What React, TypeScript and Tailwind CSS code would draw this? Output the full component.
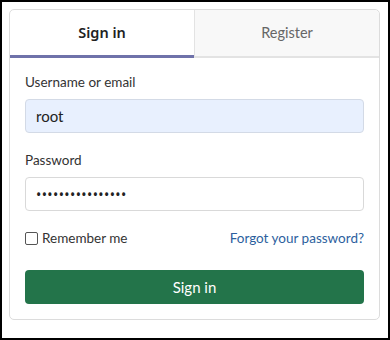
import React from "react";

export default function App() {
  return (
    <div
      className="w-[390px] h-[340px] border-2 border-black bg-white p-[7px] text-[#333]"
      style={{ fontFamily: 'Lato, "Noto Sans", sans-serif' }}
    >
      <div className="w-[371px] h-[311px] border border-[#dcdcdc] rounded-[5px] bg-white flex flex-col">
        <div className="flex h-[48px]">
          <div
            className="w-[184px] flex items-center justify-center border-b-[3px] border-[#6f72aa] text-[14.5px] font-semibold text-[#222]"
            style={{ fontFamily: '"Noto Sans", sans-serif' }}
          >
            Sign in
          </div>
          <div className="flex-1 flex items-center justify-center bg-[#f8f8f8] border-l border-b-2 border-[#e3e3e3] rounded-tr-[5px] text-[14.5px] text-[#666]">
            Register
          </div>
        </div>
        <div className="px-[15px] pt-[14px] flex flex-col">
          <label className="text-[13.5px] leading-[20px] text-[#333]">Username or email</label>
          <div className="mt-[7px] h-[34px] rounded-[4px] border border-[#d3dae6] bg-[#e8f0fe] flex items-center px-[10px] text-[15px] text-[#222]">
            root
          </div>
          <label className="mt-[17px] text-[13.5px] leading-[20px] text-[#333]">Password</label>
          <div
            className="mt-[7px] h-[34px] rounded-[4px] border border-[#d9d9d9] bg-white flex items-center px-[10px] text-[14px] text-[#222] tracking-[0.4px]"
            style={{ fontFamily: '"Noto Sans", sans-serif' }}
          >
            ••••••••••••••••
          </div>
          <div className="mt-[19px] flex items-center justify-between h-[16px]">
            <label className="flex items-center text-[13.5px] text-[#333]">
              <span className="w-[13px] h-[13px] border border-[#555] rounded-[2px] bg-white mr-[4px]" />
              Remember me
            </label>
            <span className="text-[13.5px] text-[#2d5f9e]">Forgot your password?</span>
          </div>
          <div className="mt-[24px] h-[34px] rounded-[4px] bg-[#23744a] flex items-center justify-center text-white text-[15px]">
            Sign in
          </div>
        </div>
      </div>
    </div>
  );
}
